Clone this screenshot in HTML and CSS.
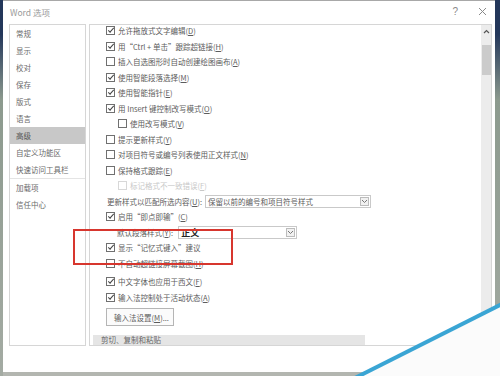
FILE: index.html
```html
<!DOCTYPE html>
<html lang="zh-CN">
<head>
    <meta charset="UTF-8">
    <meta name="viewport" content="width=device-width, initial-scale=1.0">
    <title>Word 选项</title>
    <link rel="stylesheet" href="styles.css">
</head>
<body>
    <div class="dialog">
        <div class="titlebar">
            <span class="title">Word 选项</span>
            <span class="help">?</span>
            <svg class="close" width="9" height="9" viewBox="0 0 9 9"><path d="M1 1L8 8M8 1L1 8" stroke="#8a8a8a" stroke-width="1"/></svg>
        </div>
        <div class="main">
            <div class="nav">
                <div class="navItem">常规</div>
                <div class="navItem">显示</div>
                <div class="navItem">校对</div>
                <div class="navItem">保存</div>
                <div class="navItem">版式</div>
                <div class="navItem">语言</div>
                <div class="navItem active">高级</div>
                <div class="navItem">自定义功能区</div>
                <div class="navItem">快速访问工具栏</div>
                <div class="sep"></div>
                <div class="navItem">加载项</div>
                <div class="navItem">信任中心</div>
            </div>
            <div class="panel">
                <div class="content">
                    <div class="row"><span class="box on"></span>允许拖放式文字编辑(<u>D</u>)</div>
                    <div class="row"><span class="box on"></span>用“Ctrl + 单击”跟踪超链接(<u>H</u>)</div>
                    <div class="row"><span class="box"></span>插入自选图形时自动创建绘图画布(<u>A</u>)</div>
                    <div class="row"><span class="box on"></span>使用智能段落选择(<u>M</u>)</div>
                    <div class="row"><span class="box on"></span>使用智能指针(<u>E</u>)</div>
                    <div class="row"><span class="box on"></span>用 Insert 键控制改写模式(<u>O</u>)</div>
                    <div class="row sub"><span class="box"></span>使用改写模式(<u>V</u>)</div>
                    <div class="row"><span class="box"></span>提示更新样式(<u>Y</u>)</div>
                    <div class="row"><span class="box"></span>对项目符号或编号列表使用正文样式(<u>N</u>)</div>
                    <div class="row"><span class="box"></span>保持格式跟踪(<u>E</u>)</div>
                    <div class="row sub off"><span class="box"></span>标记格式不一致错误(<u>F</u>)</div>
                    <div class="row field">
                        <span>更新样式以匹配所选内容(<u>U</u>):</span>
                        <div class="select wide">
                            <span>保留以前的编号和项目符号样式</span>
                            <span class="drop"><svg width="7" height="5" viewBox="0 0 7 5"><path d="M1 1L3.5 3.5L6 1" stroke="#777" fill="none"/></svg></span>
                        </div>
                    </div>
                    <div class="row"><span class="box on"></span>启用“即点即输”(<u>C</u>)</div>
                    <div class="row field sub">
                        <span>默认段落样式(<u>Y</u>):</span>
                        <div class="select short">
                            <span class="strong">正文</span>
                            <span class="drop"><svg width="7" height="5" viewBox="0 0 7 5"><path d="M1 1L3.5 3.5L6 1" stroke="#777" fill="none"/></svg></span>
                        </div>
                    </div>
                    <div class="row"><span class="box on"></span>显示“记忆式键入”建议</div>
                    <div class="row gapAfter"><span class="box"></span>不自动超链接屏幕截图(<u>H</u>)</div>
                    <div class="row"><span class="box on"></span>中文字体也应用于西文(<u>F</u>)</div>
                    <div class="row"><span class="box on"></span>输入法控制处于活动状态(<u>A</u>)</div>
                    <button class="btn">输入法设置(<u>M</u>)...</button>
                    <div class="section">剪切、复制和粘贴</div>
                </div>
                <div class="scrollbar">
                    <svg class="up" width="7" height="5" viewBox="0 0 7 5"><path d="M1 4L3.5 1.5L6 4" stroke="#555" fill="none" stroke-width="1.2"/></svg>
                    <div class="thumb"></div>
                </div>
            </div>
        </div>
    </div>

    <div class="mark"></div>
    <svg class="curl" width="500" height="376" viewBox="0 0 500 376">
        <polygon points="357,376 500,304 500,376" fill="#fbfbfb"/>
        <line x1="355" y1="378" x2="502" y2="304" stroke="#3aa5d4" stroke-width="4"/>
    </svg>
</body>
</html>
```

FILE: styles.css
```css
body{
    margin: 0;
    width: 500px;
    height: 376px;
    overflow: hidden;
    background: linear-gradient(#23375a 0px, #23375a 34px, #8c9a8e 100px, #a4aba3 376px);
    font-family: "Noto Sans CJK SC", "Noto Sans", sans-serif;
    font-size: 7.5px;
    color: #5c5c5c;
}
.dialog{
    margin: 0 5px 0 3px;
    height: 371px;
    background-color: #fff;
    border-top: 1px solid #a8a8a8;
    border-bottom: 4px solid #b3b6b0;
    display: flex;
    flex-direction: column;
}
.titlebar{
    height: 23px;
    display: flex;
    align-items: center;
    padding: 0 0 2px 7px;
    box-sizing: border-box;
}
.title{
    font-size: 8.5px;
    color: #9a9a9a;
    flex: 1;
}
.help{
    font-family: "Liberation Sans", sans-serif;
    font-size: 10px;
    color: #8a8a8a;
    margin-right: 20px;
}
.close{
    margin-right: 8px;
}
.main{
    display: flex;
    height: 322px;
    padding-left: 6px;
}
.nav{
    width: 77px;
    border: 1px solid #d6d6d6;
    box-sizing: border-box;
    color: #6a6a6a;
}
.navItem{
    height: 17px;
    line-height: 17px;
    padding-left: 6px;
    white-space: nowrap;
}
.navItem.active{
    background-color: #c8c8c8;
    color: #555;
}
.sep{
    height: 1px;
    background-color: #e4e4e4;
}
.panel{
    width: 403px;
    margin-left: 3px;
    border: 1px solid #d6d6d6;
    box-sizing: border-box;
    display: flex;
    overflow: hidden;
}
.content{
    flex: 1;
    padding-left: 16px;
    margin-top: -2px;
    overflow: hidden;
}
.row{
    height: 15.5px;
    display: flex;
    align-items: center;
    white-space: nowrap;
}
.row.sub{
    padding-left: 12px;
}
.row.off{
    color: #c8c8c8;
}
.row.off .box{
    border-color: #d8d8d8;
}
.row.gapAfter{
    margin-bottom: 3px;
}
.row.field{
    padding-left: 1px;
}
.row.field.sub{
    padding-left: 11px;
}
u{
    text-decoration-thickness: 1px;
    text-underline-offset: 1px;
}
.box{
    width: 9px;
    height: 9px;
    border: 1px solid #707070;
    box-sizing: border-box;
    margin-right: 3px;
    position: relative;
    flex-shrink: 0;
}
.box.on::after{
    content: "";
    position: absolute;
    left: 1px;
    top: 1px;
    width: 5px;
    height: 2px;
    border-left: 1px solid #444;
    border-bottom: 1px solid #444;
    transform: rotate(-48deg);
}
.select{
    height: 13px;
    border: 1px solid #c9c9c9;
    box-sizing: border-box;
    display: flex;
    align-items: center;
    justify-content: space-between;
    padding-left: 2px;
    line-height: 1;
}
.select.wide{
    width: 166px;
    margin-left: 3px;
}
.select.short{
    width: 119px;
    margin-left: 5px;
}
.strong{
    font-size: 9px;
    line-height: 1;
    color: #222;
    font-weight: bold;
}
.drop{
    width: 9px;
    height: 9px;
    border: 1px solid #bcbcbc;
    background-color: #f1f1f1;
    box-sizing: border-box;
    margin-right: 1px;
    display: flex;
    align-items: center;
    justify-content: center;
}
.btn{
    display: block;
    margin-top: 3px;
    height: 18px;
    width: 68px;
    padding: 0 0 0 7px;
    text-align: left;
    border: 1px solid #b5b5b5;
    background-color: #fbfbfb;
    font-family: inherit;
    font-size: 7.5px;
    color: #5c5c5c;
}
.section{
    margin: 9px 0 0 -13px;
    width: 272px;
    height: 10px;
    line-height: 10px;
    background-color: #e5e5e5;
    padding-left: 8px;
    box-sizing: border-box;
    font-size: 7.5px;
    color: #666;
}
.scrollbar{
    width: 10px;
    background-color: #ececec;
    display: flex;
    flex-direction: column;
    align-items: center;
}
.up{
    margin-top: 4px;
}
.thumb{
    width: 9px;
    height: 30px;
    margin-top: 11px;
    background-color: #cbcbcb;
}
.mark{
    position: absolute;
    left: 73px;
    top: 229px;
    width: 160px;
    height: 36px;
    border: 2px solid #d7362e;
    box-sizing: border-box;
}
.curl{
    position: absolute;
    left: 0;
    top: 0;
}
```
